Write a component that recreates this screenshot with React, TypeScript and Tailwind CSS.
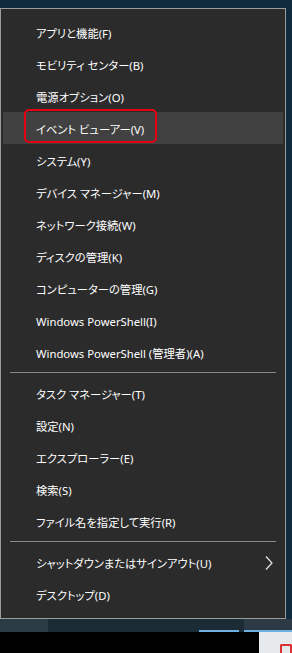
import React from "react";

type Item = { label: string; hl?: boolean; arrow?: boolean };

const g1: Item[] = [
  { label: "アプリと機能(F)" },
  { label: "モビリティ センター(B)" },
  { label: "電源オプション(O)" },
  { label: "イベント ビューアー(V)", hl: true },
  { label: "システム(Y)" },
  { label: "デバイス マネージャー(M)" },
  { label: "ネットワーク接続(W)" },
  { label: "ディスクの管理(K)" },
  { label: "コンピューターの管理(G)" },
  { label: "Windows PowerShell(I)" },
  { label: "Windows PowerShell (管理者)(A)" },
];
const g2: Item[] = [
  { label: "タスク マネージャー(T)" },
  { label: "設定(N)" },
  { label: "エクスプローラー(E)" },
  { label: "検索(S)" },
  { label: "ファイル名を指定して実行(R)" },
];
const g3: Item[] = [
  { label: "シャットダウンまたはサインアウト(U)", arrow: true },
  { label: "デスクトップ(D)" },
];

function Row({ item }: { item: Item }) {
  return (
    <div
      className={`relative mx-[2px] flex h-[32px] items-center pl-[33px] pr-[10px] pt-[3px] ${
        item.hl ? "bg-[#414141]" : ""
      }`}
    >
      <span className="text-[11.3px] leading-none text-white [font-feature-settings:'palt']">
        {item.label}
      </span>
      {item.hl && (
        <div className="pointer-events-none absolute left-[21px] top-[-3px] h-[34px] w-[133px] rounded-[5px] border-2 border-[#e60012]" />
      )}
      {item.arrow && (
        <svg
          className="absolute right-[10px] top-[10px]"
          width="8"
          height="14"
          viewBox="0 0 8 14"
        >
          <polyline
            points="1,0.5 7,7 1,13.5"
            fill="none"
            stroke="#e8e8e8"
            strokeWidth="1.2"
          />
        </svg>
      )}
    </div>
  );
}

function Sep() {
  return (
    <div className="flex h-[9px] items-center px-[9px]">
      <div className="h-px w-full bg-[#8a8a8a]" />
    </div>
  );
}

export default function App() {
  return (
    <div
      className="flex h-[653px] w-[292px] flex-col overflow-hidden bg-[#0e2a3b]"
      style={{ fontFamily: '"Noto Sans", "Noto Sans CJK JP", sans-serif' }}
    >
      <div className="h-[8px] bg-[#0e2a3b]" />
      <div className="flex">
        <div className="w-[286px] border border-[#9b9b9b] bg-[#2b2b2b] pb-[8px] pt-[7px]">
          {g1.map((it) => (
            <Row key={it.label} item={it} />
          ))}
          <Sep />
          {g2.map((it) => (
            <Row key={it.label} item={it} />
          ))}
          <Sep />
          {g3.map((it) => (
            <Row key={it.label} item={it} />
          ))}
        </div>
        <div className="flex-1 bg-[#0f2b3d]" />
      </div>
      <div className="flex h-[13px]">
        <div className="w-[48px] bg-[#2c3c47]" />
        <div className="flex w-[196px] flex-col bg-[#1b2c37]">
          <div className="flex-1" />
          <div className="ml-[151px] h-[2px] w-[40px] bg-[#6fb0e0]" />
        </div>
        <div className="flex flex-1 flex-col bg-[#2b3a44]">
          <div className="flex-1" />
          <div className="h-[2px] bg-[#6fb0e0]" />
        </div>
      </div>
      <div className="flex flex-1">
        <div className="w-[259px] bg-black" />
        <div className="relative flex-1 bg-[#e6eaed]">
          <div className="absolute bottom-0 left-[21px] h-[9px] w-[12px] rounded-t-[2px] border-2 border-b-0 border-[#d33]" />
        </div>
      </div>
    </div>
  );
}
